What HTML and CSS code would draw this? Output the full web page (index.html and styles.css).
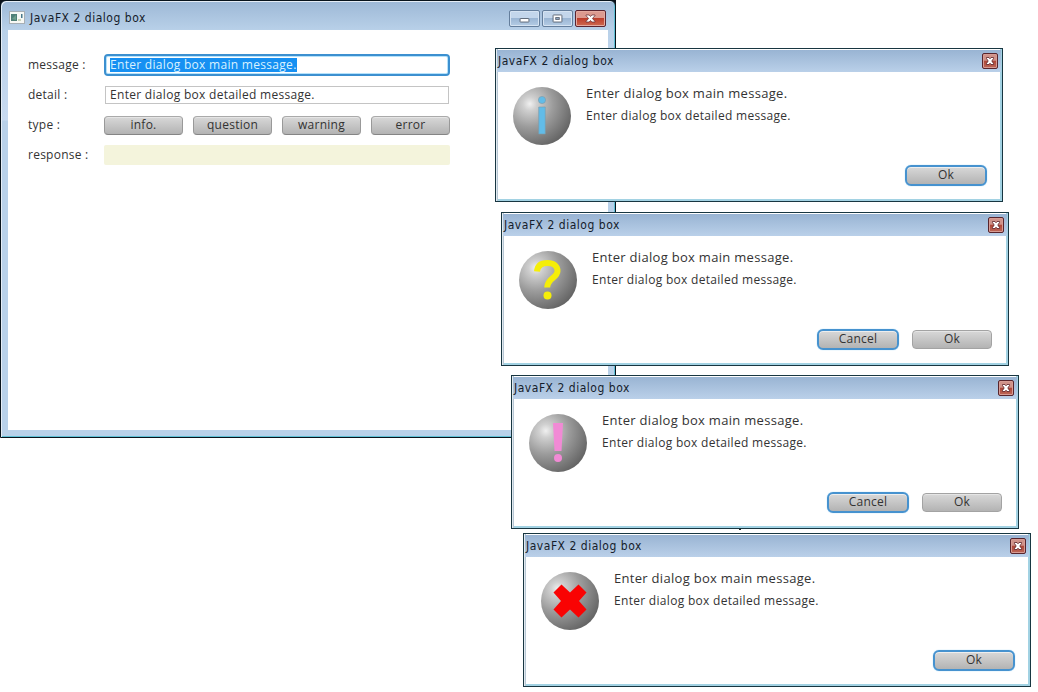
FILE: index.html
```html
<!DOCTYPE html>
<html lang="en">
<head>
<meta charset="utf-8">
<title>JavaFX 2 dialog box</title>
<link rel="stylesheet" href="styles.css">
</head>
<body>
<svg class="defs" width="0" height="0" aria-hidden="true">
  <defs>
    <radialGradient id="ball" cx="0.29" cy="0.29" r="0.8">
      <stop offset="0" stop-color="#f0f0f0"/>
      <stop offset="0.15" stop-color="#cfcfcf"/>
      <stop offset="0.5" stop-color="#9c9c9c"/>
      <stop offset="1" stop-color="#626262"/>
    </radialGradient>
    <symbol id="close" viewBox="0 0 14 14">
      <path d="M3.500 3.500h2.500l1 1.300 1-1.300h2.500v1L8.800 7l1.700 2.500v1H8L7 9.200l-1 1.300H3.500v-1L5.200 7 3.500 4.500z" fill="#fff" stroke="#5b2024" stroke-width=".8"/>
    </symbol>
  </defs>
</svg>

<main class="desktop">
  <section class="window">
    <header class="window-bar">
      <svg class="app-icon" width="16" height="13" viewBox="0 0 16 13">
        <rect x=".5" y=".5" width="15" height="12" fill="#f7f8f5" stroke="#a7afb5"/>
        <rect x="2" y="3" width="6" height="7" fill="#508078"/>
        <path d="M3 8l4-4v5z" fill="#6f9f8c"/>
        <rect x="9" y="8" width="3" height="2" fill="#c7d5b8"/>
        <rect x="12" y="3" width="1.500" height="4" fill="#49798b"/>
      </svg>
      <h1 class="title title-main">JavaFX 2 dialog box</h1>
      <div class="controls">
        <svg class="control" width="31" height="17" viewBox="0 0 31 17"><rect x="10.500" y="8.500" width="10" height="4" rx=".5" fill="#fff" stroke="#535d6c"/></svg>
        <svg class="control" width="31" height="17" viewBox="0 0 31 17"><rect x="10.500" y="4.500" width="10" height="8" rx=".5" fill="#fff" stroke="#535d6c"/><rect x="13.500" y="7.500" width="4" height="2" fill="#9bb5d2" stroke="#535d6c"/></svg>
        <svg class="control control-close" width="31" height="17" viewBox="0 0 31 17"><path d="M10.500 4.500h3.500l1.500 1.700 1.500-1.700h3.500v.8L17.700 8.500l2.800 3.200v.8H17l-1.500-1.700L14 12.500h-3.500v-.8l2.800-3.200-2.800-3.200z" fill="#fff" stroke="#693239" stroke-width=".9"/></svg>
      </div>
    </header>
    <div class="form">
      <div class="label">message :</div>
      <div class="field focused"><span class="selected">Enter dialog box main message.</span></div>
      <div class="label">detail :</div>
      <div class="field"><span>Enter dialog box detailed message.</span></div>
      <div class="label">type :</div>
      <div class="types">
        <button class="button">info.</button>
        <button class="button">question</button>
        <button class="button">warning</button>
        <button class="button">error</button>
      </div>
      <div class="label">response :</div>
      <div class="response"></div>
    </div>
  </section>

  <section class="dialog info">
    <header class="dialog-bar"><h2 class="title">JavaFX 2 dialog box</h2><svg class="close" width="16" height="16"><use href="#close"/></svg></header>
    <div class="content">
      <svg class="sign" width="58" height="58" viewBox="0 0 58 58">
        <circle cx="29" cy="29" r="29" fill="url(#ball)"/>
        <g fill="#62bce8" stroke="#7b9aaa" stroke-width=".6"><circle cx="29" cy="13" r="3.600"/><path d="M25.700 20h6.600v27h-6.600z"/></g>
      </svg>
      <div class="messages"><p class="main">Enter dialog box main message.</p><p class="detail">Enter dialog box detailed message.</p></div>
    </div>
    <footer class="actions single"><button class="button default">Ok</button></footer>
  </section>

  <section class="dialog question">
    <header class="dialog-bar"><h2 class="title">JavaFX 2 dialog box</h2><svg class="close" width="16" height="16"><use href="#close"/></svg></header>
    <div class="content">
      <svg class="sign" width="58" height="58" viewBox="0 0 58 58">
        <circle cx="29" cy="29" r="29" fill="url(#ball)"/>
        <path d="M18 20.500C18.500 14.500 22.500 12 28.500 12c6 0 10 3 10 8 0 7-10.300 7-10.300 16.500" fill="none" stroke="#f5ee08" stroke-width="6"/>
        <circle cx="28.500" cy="44.500" r="4" fill="#f5ee08"/>
      </svg>
      <div class="messages"><p class="main">Enter dialog box main message.</p><p class="detail">Enter dialog box detailed message.</p></div>
    </div>
    <footer class="actions"><button class="button default">Cancel</button><button class="button">Ok</button></footer>
  </section>

  <section class="dialog warning">
    <header class="dialog-bar"><h2 class="title">JavaFX 2 dialog box</h2><svg class="close" width="16" height="16"><use href="#close"/></svg></header>
    <div class="content">
      <svg class="sign" width="58" height="58" viewBox="0 0 58 58">
        <circle cx="29" cy="29" r="29" fill="url(#ball)"/>
        <path d="M24 9h10l-1.500 28h-7z" fill="#f18ad5"/>
        <circle cx="29" cy="44" r="4" fill="#f18ad5"/>
      </svg>
      <div class="messages"><p class="main">Enter dialog box main message.</p><p class="detail">Enter dialog box detailed message.</p></div>
    </div>
    <footer class="actions"><button class="button default">Cancel</button><button class="button">Ok</button></footer>
  </section>

  <div class="speck"></div>

  <section class="dialog error">
    <header class="dialog-bar"><h2 class="title">JavaFX 2 dialog box</h2><svg class="close" width="16" height="16"><use href="#close"/></svg></header>
    <div class="content">
      <svg class="sign" width="58" height="58" viewBox="0 0 58 58">
        <circle cx="29" cy="29" r="29" fill="url(#ball)"/>
        <path d="M20.500 12.500l8.500 8 8.500-8 8 8-7.500 8.500 7.500 8.500-8 8-8.500-8-8.500 8-8-8 7.500-8.500-7.500-8.500z" fill="#f90303"/>
      </svg>
      <div class="messages"><p class="main">Enter dialog box main message.</p><p class="detail">Enter dialog box detailed message.</p></div>
    </div>
    <footer class="actions single"><button class="button default">Ok</button></footer>
  </section>
</main>
</body>
</html>
```
FILE: styles.css
```css
* { box-sizing: border-box; }
body { margin: 0; background: #fff; color: #333; font: 12px/16px "Open Sans", sans-serif; }
h1, h2, p { margin: 0; font-weight: 400; }
.defs { position: absolute; }
.desktop { position: relative; z-index: 0; width: 1038px; height: 692px; overflow: hidden; }

.window {
  position: absolute; left: 0; top: 0; width: 616px; height: 438px;
  padding: 1px 7px 7px; border: 1px solid #08131c;
  border-radius: 6px 6px 0 0;
  background: linear-gradient(#9db8d6, #b9d1e9 30px, #c8daf0 119px, #b9d1e9 120px);
  box-shadow: inset 1px 1px #e5edf6, inset -1px -1px #5fc0d5;
}
.window::before { content: ""; position: absolute; z-index: -1; inset: -1px -1px auto; height: 10px; background: #0a1018; }
.window-bar { display: flex; height: 28px; padding: 7px 0 0 1px; align-items: flex-start; }
.app-icon { margin-top: 2px; }
.title { color: #141c2b; font: 12px/16px "DejaVu Sans Condensed", "DejaVu Sans", sans-serif; font-stretch: condensed; letter-spacing: .52px; white-space: nowrap; }
.title-main { margin-left: 5px; margin-top: 1px; }
.controls { display: flex; gap: 2px; margin: 0 2px 0 auto; padding-top: 1px; }
.control { border: 1px solid #647e9c; border-radius: 2px; background: linear-gradient(#c3d6eb 45%, #9bb6d4 50%, #b4cce5); box-shadow: inset 0 0 0 1px #d5e3f2; }
.control-close { border-color: #5a2430; background: linear-gradient(#dc9a90 45%, #bd3e2c 50%, #ce6a51); box-shadow: inset 0 0 0 1px #e4aaa0; }

.form {
  display: grid; grid-template-columns: 76px 346px; grid-auto-rows: 20px; row-gap: 10px;
  height: 400px; padding: 25px 20px; align-content: start; background: #fff;
}
.label { line-height: 19px; letter-spacing: .25px; white-space: nowrap; }
.field { margin: 1px; height: 18px; padding-left: 4px; border: 1px solid #c4c4c4; line-height: 16px; letter-spacing: .3px; white-space: nowrap; }
.field span { display: inline-block; height: 14px; line-height: 14px; vertical-align: top; margin-top: 1px; }
.field.focused { margin: -1px 0 0; height: 22px; padding: 1px 0 0 4px; border: 2px solid #3c90d0; border-radius: 4px; box-shadow: inset 0 0 0 1px #b5e2fb; }
.field .selected { background: #1690f2; color: #d9f2ff; }
.types { display: flex; gap: 10px; padding-top: 1px; }
.button {
  width: 79px; height: 19px; margin: 0; padding: 0 0 2px; border: 1px solid #a3a3a3; border-radius: 4px;
  background: linear-gradient(#d8d8d8, #b3b3b3); box-shadow: inset 0 1px #e5e5e5;
  color: #333; font: inherit; line-height: 15px; letter-spacing: .25px;
}
.types .button { border-color: #aaa #999 #858585; }
.response { background: #f4f4dc; border-radius: 2px; }

.dialog {
  position: absolute; width: 508px; height: 154px; border: 1px solid #183641;
  background: #fff; box-shadow: inset 1px 0 #e2eaf0, inset 2px 0 #b7c7d4, inset -2px -2px #a2d2e3;
}
.info { left: 495px; top: 48px; }
.question { left: 501px; top: 212px; }
.warning { left: 511px; top: 375px; }
.error { left: 523px; top: 533px; }
.dialog-bar { display: flex; justify-content: space-between; margin: 1px 1px 0; height: 22px; padding: 3px 3px 0 1px; background: linear-gradient(#99b4d3, #bad0e9); }
.close { border: 1px solid #58252c; border-radius: 2px; background: linear-gradient(#cf9289 45%, #ad4637 50%, #bd6859); box-shadow: inset 0 0 0 1px #d79c94; }
.content { display: flex; gap: 15px; padding: 15px 17px 0; height: 93px; }
.messages { color: #333; white-space: nowrap; }
.main { margin-top: -2px; font-size: 13px; line-height: 16px; letter-spacing: .3px; }
.detail { margin-top: 7px; letter-spacing: .3px; }
.actions { display: flex; justify-content: flex-end; gap: 13px; padding: 0 16px 0 0; }
.actions.single { padding-right: 15px; }
.actions .button { width: 80px; margin-top: 1px; }
.actions .button.default { width: 82px; height: 21px; margin-top: 0; padding: 0 0 2px; border: 2px solid #4692cf; border-radius: 6px; box-shadow: 0 0 1px #67bdf5, inset 0 1px #eee; }
.speck { position: absolute; left: 739px; top: 529px; width: 2px; height: 1px; background: #222; }
```
